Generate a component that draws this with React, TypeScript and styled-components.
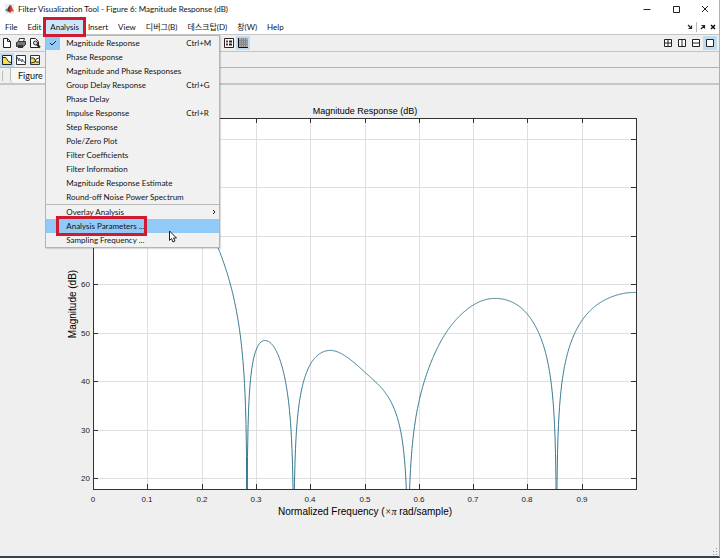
import React from "react";
import styled, { createGlobalStyle, css } from "styled-components";

const GlobalStyle = createGlobalStyle`
  * { box-sizing: border-box; }
  body { margin: 0; background: #fff; }
  button { font: inherit; color: inherit; border: 0; background: none; padding: 0; }
`;

const Frame = styled.div`
  display: flex;
  flex-direction: column;
  min-height: 100vh;
  background: #efefef;
  border-right: 1px solid #9fb4bf;
  border-bottom: 2px solid #39424f;
  color: #111;
  font: 8px/14px Lato, "Noto Sans CJK KR", sans-serif;
  overflow: hidden;
`;

const TitleBar = styled.header`
  display: flex;
  align-items: center;
  height: 17px;
  padding: 0 8px 0 5px;
  gap: 4px;
  background: #fff;
`;

const Title = styled.h1`
  flex: 1;
  margin: 0;
  font-size: 8px;
  font-weight: 400;
  white-space: nowrap;
`;

const WindowButtons = styled.div`
  display: flex;
  gap: 17px;
`;

const IconButton = styled.button<{ $size: number }>`
  display: flex;
  align-items: center;
  justify-content: center;
  width: ${(p) => p.$size}px;
  height: ${(p) => p.$size}px;
  flex: none;
`;

const MenuBar = styled.nav`
  display: flex;
  align-items: center;
  height: 17px;
  padding: 2px 2px 0 0;
  background: #fff;
`;

const MenuSlot = styled.div`
  position: relative;
`;

const mark = css`
  &::after {
    content: "";
    position: absolute;
    inset: -3px;
    border: 3px solid #cf1a2f;
    pointer-events: none;
    z-index: 3;
  }
`;

const MenuButton = styled.button<{ $open?: boolean }>`
  position: relative;
  display: block;
  height: 14px;
  padding: 0 ${(p) => (p.$open ? 4 : 5)}px;
  white-space: nowrap;
  background: ${(p) => (p.$open ? "#cbe6f8" : "transparent")};
  ${(p) => p.$open && mark}
`;

const DockControls = styled.div`
  display: flex;
  align-items: center;
  gap: 2px;
  margin-left: auto;
`;

const DockDivider = styled.span`
  width: 1px;
  height: 10px;
  background: #bbb;
`;

const Dropdown = styled.div`
  position: absolute;
  z-index: 2;
  top: 15px;
  left: -1px;
  width: 175px;
  background: #f1f1f1;
  border: 1px solid #b4b4b4;
  box-shadow: 1px 1px 1px #0002;
`;

const Group = styled.div`
  & + & { border-top: 1px solid #b9b9b9; }
`;

const Item = styled.button<{ $active?: boolean }>`
  display: flex;
  align-items: center;
  width: 100%;
  height: 14px;
  padding-right: 2px;
  text-align: left;
  white-space: nowrap;
  background: ${(p) => (p.$active ? "#91c9f7" : "transparent")};
`;

const CheckCell = styled.span<{ $checked?: boolean }>`
  display: flex;
  align-items: center;
  justify-content: center;
  flex: none;
  width: 14px;
  height: 14px;
  margin-right: 6px;
  background: ${(p) => (p.$checked ? "#91c9f7" : "transparent")};
`;

const ItemLabel = styled.span<{ $marked?: boolean }>`
  position: relative;
  height: 14px;
  ${(p) => p.$marked && mark}
  &::after { left: -10px; }
`;

const Shortcut = styled.span`
  width: 31px;
  margin-left: auto;
`;

const Submenu = styled.svg`
  margin-left: auto;
`;

const Pointer = styled.svg`
  position: absolute;
  left: 123px;
  top: 194px;
  z-index: 4;
`;

const Toolbar = styled.div<{ $h: number }>`
  display: flex;
  align-items: center;
  height: ${(p) => p.$h}px;
  border-top: 1px solid #c4c4c4;
  padding-right: 2px;
`;

const ToolGroup = styled.div<{ $start?: number; $end?: boolean }>`
  display: flex;
  margin-left: ${(p) => (p.$end ? "auto" : `${p.$start ?? 0}px`)};
`;

const Tool = styled.button<{ $on?: boolean }>`
  display: flex;
  align-items: center;
  justify-content: center;
  width: 14px;
  height: 14px;
  background: ${(p) => (p.$on ? "#bfdcf0" : "transparent")};
`;

const TabStrip = styled.div`
  display: flex;
  height: 18px;
  border-top: 1px solid #b4b4b4;
  border-bottom: 2px solid #c6c6c6;
`;

const Grip = styled.span`
  width: 1px;
  height: 10px;
  margin: 3px 7px 0 2px;
  background: #bbb;
`;

const Tab = styled.button`
  width: 120px;
  padding: 0 7px;
  font-size: 9px;
  text-align: left;
  background: #f8f8f8;
  border: solid #bbb;
  border-width: 0 1px;
  border-radius: 0 0 4px 4px;
`;

const Figure = styled.main`
  flex: 1;
  position: relative;
`;

const Plot = styled.svg`
  display: block;
  width: 100%;
  height: auto;
  font-family: "Liberation Sans", Arial, sans-serif;
  fill: #222;
`;

const ResizeGrip = styled.svg`
  position: absolute;
  right: 1px;
  bottom: 1px;
`;

const LEFT = 93, RIGHT = 636, TOP = 118, BOTTOM = 489;

/* Response: four unit-circle zeros times a slowly varying gain. */
const ZEROS = [247, 293.7, 408, 556.5];
const KNOTS: [number, number][] = [
  [218.3, 248.3], [240, 333.3], [264.5, 340.5], [280, 360], [305, 376.7], [328.5, 350.5],
  [365, 372.3], [390, 400], [419.3, 400], [446.7, 331.7], [474, 304.6], [495, 298.4],
  [528.3, 315.3], [582.3, 320], [610, 297.5], [636, 292.5],
];

const omega = (x: number) => ((x - LEFT) / (RIGHT - LEFT)) * Math.PI;
const zeroGain = (x: number) =>
  ZEROS.reduce((sum, z) => sum - 97 * Math.log10(Math.abs(Math.cos(omega(x)) - Math.cos(omega(z))) + 1e-7), 0);
const residual = KNOTS.map(([x, y]) => ({ x, r: y - zeroGain(x) }));

const gainAt = (x: number) => {
  const n = residual.length;
  if (x <= residual[0].x) return residual[0].r;
  if (x >= residual[n - 1].x) return residual[n - 1].r;
  const i = residual.findIndex((k) => k.x > x) - 1;
  const slope = (j: number) => {
    const a = residual[Math.max(j - 1, 0)];
    const b = residual[Math.min(j + 1, n - 1)];
    return (b.r - a.r) / (b.x - a.x);
  };
  const p = residual[i], q = residual[i + 1], h = q.x - p.x, t = (x - p.x) / h;
  return (
    p.r * (1 + 2 * t) * (1 - t) ** 2 + slope(i) * h * t * (1 - t) ** 2 +
    q.r * t * t * (3 - 2 * t) + slope(i + 1) * h * t * t * (t - 1)
  );
};

const curve = Array.from({ length: (RIGHT - LEFT) * 2 + 1 }, (_, i) => {
  const x = LEFT + i / 2;
  return `${i ? "L" : "M"}${x} ${(zeroGain(x) + gainAt(x)).toFixed(2)}`;
}).join("");

const xTicks = Array.from({ length: 10 }, (_, i) => ({ x: Math.round(LEFT + i * 54.3), label: i ? `0.${i}` : "0" }));
const yTicks = [20, 30, 40, 50, 60, 70, 80, 90].map((v) => ({ y: Math.round(478 - (v - 20) * 4.85), v }));

const Chart = () => (
  <Plot viewBox="0 85 719 471" role="img" aria-label="Magnitude Response (dB)">
    <clipPath id="axes"><rect x={LEFT} y={TOP} width={RIGHT - LEFT} height={BOTTOM - TOP} /></clipPath>
    <rect x={LEFT} y={TOP} width={RIGHT - LEFT} height={BOTTOM - TOP} fill="#fff" />
    <g stroke="#dfdfdf" shapeRendering="crispEdges">
      {xTicks.slice(1).map((t) => <path key={t.x} d={`M${t.x + 0.5} ${TOP}V${BOTTOM}`} />)}
      {yTicks.map((t) => <path key={t.y} d={`M${LEFT} ${t.y + 0.5}H${RIGHT}`} />)}
    </g>
    <g stroke="#333" fill="none" shapeRendering="crispEdges">
      {xTicks.slice(1).map((t) => <path key={t.x} d={`M${t.x + 0.5} ${BOTTOM}v-5M${t.x + 0.5} ${TOP}v5`} />)}
      {yTicks.map((t) => <path key={t.y} d={`M${LEFT} ${t.y + 0.5}h5M${RIGHT} ${t.y + 0.5}h-5`} />)}
      <path d={`M${LEFT + 0.5} ${TOP + 0.5}H${RIGHT + 0.5}V${BOTTOM + 0.5}H${LEFT + 0.5}Z`} />
    </g>
    <path d={curve} clipPath="url(#axes)" fill="none" stroke="#3a7a94" strokeLinejoin="round" />
    <g fontSize="8" textAnchor="middle">
      {xTicks.map((t) => <text key={t.x} x={t.x} y="502">{t.label}</text>)}
    </g>
    <g fontSize="8" textAnchor="end">
      {yTicks.filter((t) => t.v <= 60).map((t) => <text key={t.y} x="90" y={t.y + 3}>{t.v}</text>)}
    </g>
    <g fill="#000" textAnchor="middle">
      <text x="365" y="114" fontSize="9">Magnitude Response (dB)</text>
      <text x="365" y="515" fontSize="10">
        Normalized Frequency (<tspan fontFamily="Liberation Serif" fontStyle="italic">×π</tspan> rad/sample)
      </text>
      <text transform="translate(76 304) rotate(-90)" fontSize="10">Magnitude (dB)</text>
    </g>
  </Plot>
);

const icons: Record<string, React.ReactNode> = {
  page: <path d="M2.5 1.5h4l3 3v6h-7zM6.5 1.5v3h3" fill="#fff" stroke="#222" />,
  print: (
    <>
      <path d="M3.5 4.5l1-3h5l-1 3" fill="#fff" stroke="#333" />
      <path d="M1.5 5.5l2-1h7v3l-2 2h-7z" fill="#777" stroke="#333" />
      <path d="M3 8.5h5M3 10.5h5" stroke="#333" />
    </>
  ),
  preview: (
    <>
      <path d="M1.5 1.5h5l3 3v6h-8z" fill="#fff" stroke="#222" />
      <circle cx="6.5" cy="6" r="2" fill="#d9e6ec" stroke="#222" />
      <path d="M8 7.5l3 3" stroke="#222" strokeWidth="2" />
    </>
  ),
  magnitude: (
    <>
      <path d="M1 1h10v10H1z" fill="#fff" />
      <path d="M1 3h4l2 5 4 1v2H1z" fill="#f4e33c" />
      <path d="M1 3.5h3c3 0 1 5 7 5" fill="none" stroke="#222" />
      <path d="M1.5 1.5h9v9h-9z" fill="none" stroke="#222" />
    </>
  ),
  phase: (
    <>
      <path d="M1.5 1.5h9v9h-9z" fill="#fff" stroke="#333" />
      <path d="M2 3l2 4V4l3 4V5l3 4" fill="none" stroke="#3f5878" />
    </>
  ),
  both: (
    <>
      <path d="M1.5 1.5h9v9h-9z" fill="#fff" stroke="#333" />
      <path d="M2 4h3l2 4h3v2H2z" fill="#f4e33c" />
      <path d="M2 4h3l2 4h3M2 9l4-1 1-3 3-1" fill="none" stroke="#333" />
    </>
  ),
  legend: (
    <>
      <path d="M1.5 1.5h9v9h-9z" fill="#fff" stroke="#222" />
      <path d="M3 4.5h2M3 7.5h2" stroke="#7a2a3a" strokeWidth="2" />
      <path d="M6 4.5h3M6 7.5h3" stroke="#222" strokeWidth="2" />
    </>
  ),
  grid: (
    <>
      <path d="M2 1h9v9H2z" fill="#aaa" />
      <path d="M4.5 1v9M6.5 1v9M8.5 1v9M2 3.5h9M2 5.5h9M2 7.5h9" stroke="#888" />
      <path d="M1.5 1v9.5H11" fill="none" stroke="#111" />
    </>
  ),
  tile: <path d="M2.5 2.5h7v7h-7zM6 2.5v7M2.5 6h7" fill="#fff" stroke="#222" />,
  columns: <path d="M2.5 2.5h7v7h-7zM6 2.5v7" fill="#fff" stroke="#222" />,
  rows: <path d="M2.5 2.5h7v7h-7zM2.5 6h7" fill="#fff" stroke="#222" />,
  single: <path d="M2.5 2.5h7v7h-7z" fill="#fff" stroke="#222" />,
  minimize: <path d="M2.5 6.5h7" stroke="#222" />,
  maximize: <path d="M3.5 3.5h6v6h-6z" fill="none" stroke="#222" />,
  close: <path d="M3 3l6 6M9 3l-6 6" stroke="#222" />,
  dock: <path d="M4 4l3 3M7.5 4.5v3h-3" stroke="#222" strokeWidth="1.2" fill="none" />,
  undock: <path d="M4 8l3-3M4.5 4.5h3v3" stroke="#222" strokeWidth="1.2" fill="none" />,
  closeSmall: <path d="M4 4l4 4M8 4l-4 4" stroke="#111" strokeWidth="1.5" />,
};

const Icon = ({ name }: { name: string }) => (
  <svg width="12" height="12" viewBox="0 0 12 12" aria-hidden="true">{icons[name]}</svg>
);

const SmallIcon = ({ name }: { name: string }) => (
  <svg width="8" height="8" viewBox="2 2 8 8" aria-hidden="true">{icons[name]}</svg>
);

const Logo = () => (
  <svg width="9" height="10" viewBox="0 0 9 10" aria-hidden="true">
    <path d="M0 0h9v10H0z" fill="#e4edf3" />
    <path d="M0 6l3-2 2 2-2 2z" fill="#4a7fa6" />
    <path d="M3 4l2-3 1 0 3 7-2-1-2 2-2-2z" fill="#c4472c" />
    <path d="M3 4l2-3 0 5-2 2z" fill="#7a2a28" />
  </svg>
);

const analyses: { label: string; keys?: string; checked?: boolean }[] = [
  { label: "Magnitude Response", keys: "Ctrl+M", checked: true },
  { label: "Phase Response" },
  { label: "Magnitude and Phase Responses" },
  { label: "Group Delay Response", keys: "Ctrl+G" },
  { label: "Phase Delay" },
  { label: "Impulse Response", keys: "Ctrl+R" },
  { label: "Step Response" },
  { label: "Pole/Zero Plot" },
  { label: "Filter Coefficients" },
  { label: "Filter Information" },
  { label: "Magnitude Response Estimate" },
  { label: "Round-off Noise Power Spectrum" },
];

const AnalysisMenu = () => (
  <Dropdown role="menu" aria-label="Analysis">
    <Group>
      {analyses.map((a) => (
        <Item key={a.label} role="menuitemradio" aria-checked={!!a.checked}>
          <CheckCell $checked={a.checked}>
            {a.checked && (
              <svg width="8" height="8" viewBox="0 0 8 8"><path d="M1 4l2 2 4-4" fill="none" stroke="#123" /></svg>
            )}
          </CheckCell>
          <ItemLabel>{a.label}</ItemLabel>
          {a.keys && <Shortcut>{a.keys}</Shortcut>}
        </Item>
      ))}
    </Group>
    <Group>
      <Item role="menuitem">
        <CheckCell />
        <ItemLabel>Overlay Analysis</ItemLabel>
        <Submenu width="5" height="8" viewBox="0 0 5 8"><path d="M1 2l2 2-2 2" fill="none" stroke="#222" /></Submenu>
      </Item>
      <Item role="menuitem" $active>
        <CheckCell />
        <ItemLabel $marked>Analysis Parameters ...</ItemLabel>
      </Item>
      <Item role="menuitem">
        <CheckCell />
        <ItemLabel>Sampling Frequency ...</ItemLabel>
      </Item>
    </Group>
    <Pointer width="8" height="13" viewBox="0 0 8 13" aria-hidden="true">
      <path d="M.5 1v9.5l2-2 1.5 3.5 2-1-1.5-3h3z" fill="#fff" stroke="#222" />
    </Pointer>
  </Dropdown>
);

const ToolButton = ({ name, on }: { name: string; on?: boolean }) => (
  <Tool $on={on} aria-label={name}><Icon name={name} /></Tool>
);

const menus = ["File", "Edit", "Analysis", "Insert", "View", "디버그(B)", "데스크탑(D)", "창(W)", "Help"];

export default function App() {
  return (
    <>
      <GlobalStyle />
      <Frame>
        <TitleBar>
          <Logo />
          <Title>Filter Visualization Tool - Figure 6: Magnitude Response (dB)</Title>
          <WindowButtons>
            {["minimize", "maximize", "close"].map((n) => (
              <IconButton key={n} $size={12} aria-label={n}><Icon name={n} /></IconButton>
            ))}
          </WindowButtons>
        </TitleBar>
        <MenuBar>
          {menus.map((m) => (
            <MenuSlot key={m}>
              <MenuButton $open={m === "Analysis"}>{m}</MenuButton>
              {m === "Analysis" && <AnalysisMenu />}
            </MenuSlot>
          ))}
          <DockControls>
            <IconButton $size={8} aria-label="dock"><SmallIcon name="dock" /></IconButton>
            <DockDivider />
            <IconButton $size={8} aria-label="undock"><SmallIcon name="undock" /></IconButton>
            <IconButton $size={8} aria-label="close figure"><SmallIcon name="closeSmall" /></IconButton>
          </DockControls>
        </MenuBar>
        <Toolbar $h={17}>
          <ToolGroup>
            <ToolButton name="page" />
            <ToolButton name="print" />
            <ToolButton name="preview" />
          </ToolGroup>
          <ToolGroup $start={180}>
            <ToolButton name="legend" />
            <ToolButton name="grid" on />
          </ToolGroup>
          <ToolGroup $end>
            <ToolButton name="tile" />
            <ToolButton name="columns" />
            <ToolButton name="rows" />
            <ToolButton name="single" on />
          </ToolGroup>
        </Toolbar>
        <Toolbar $h={16}>
          <ToolGroup>
            <ToolButton name="magnitude" on />
            <ToolButton name="phase" />
            <ToolButton name="both" />
          </ToolGroup>
        </Toolbar>
        <TabStrip>
          <Grip />
          <Tab>Figure</Tab>
        </TabStrip>
        <Figure>
          <Chart />
          <ResizeGrip width="7" height="7" viewBox="0 0 7 7" aria-hidden="true">
            <path d="M5 0h1v1H5zM5 3h1v1H5zM2 3h1v1H2zM5 6h1v1H5zM2 6h1v1H2z" fill="#999" />
          </ResizeGrip>
        </Figure>
      </Frame>
    </>
  );
}
